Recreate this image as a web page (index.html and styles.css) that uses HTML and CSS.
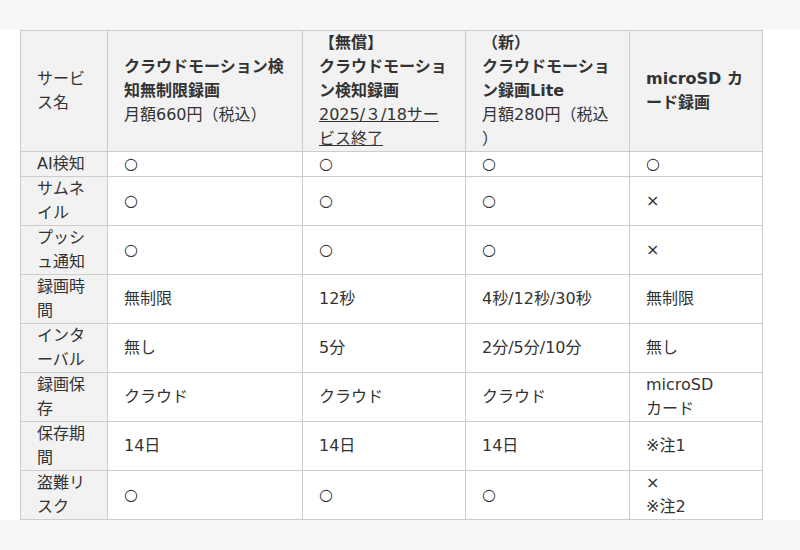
FILE: index.html
```html
<!DOCTYPE html>
<html lang="ja">
<head>
<meta charset="utf-8">
<title>比較表</title>
<link rel="stylesheet" href="styles.css">
</head>
<body>
<div class="band">
<table class="cmp">
<colgroup>
<col class="c1"><col class="c2"><col class="c3"><col class="c4"><col class="c5">
</colgroup>
<thead>
<tr>
<th class="lead">サービス名</th>
<th><b>クラウドモーション検知無制限録画</b><br><span class="price">月額660円（税込）</span></th>
<th><b>【無償】<br>クラウドモーション検知録画</b><br><a class="end" href="#">2025/３/18サービス終了</a></th>
<th><b>（新）<br>クラウドモーション録画Lite</b><br><span class="price">月額280円（税込<br>）</span></th>
<th><b>microSD カード録画</b></th>
</tr>
</thead>
<tbody>
<tr><th class="lead">AI検知</th><td>○</td><td>○</td><td>○</td><td>○</td></tr>
<tr><th class="lead">サムネイル</th><td>○</td><td>○</td><td>○</td><td>×</td></tr>
<tr><th class="lead">プッシュ通知</th><td>○</td><td>○</td><td>○</td><td>×</td></tr>
<tr><th class="lead">録画時間</th><td>無制限</td><td>12秒</td><td>4秒/12秒/30秒</td><td>無制限</td></tr>
<tr><th class="lead">インターバル</th><td>無し</td><td>5分</td><td>2分/5分/10分</td><td>無し</td></tr>
<tr><th class="lead">録画保存</th><td>クラウド</td><td>クラウド</td><td>クラウド</td><td>microSD <span class="nw">カード</span></td></tr>
<tr><th class="lead">保存期間</th><td>14日</td><td>14日</td><td>14日</td><td>※注1</td></tr>
<tr><th class="lead">盗難リスク</th><td>○</td><td>○</td><td>○</td><td>×<br>※注2</td></tr>
</tbody>
</table>
</div>
</body>
</html>
```
FILE: styles.css
```css
html, body {
  margin: 0;
  padding: 0;
  background: #f7f7f7;
}
body {
  font-family: "DejaVu Sans", "Noto Sans CJK JP", sans-serif;
  font-size: 16px;
  line-height: 24px;
  color: #333;
}
.band {
  margin-top: 30px;
  background: #fff;
  padding-left: 20px;
  height: 490px;
}
.cmp {
  border-collapse: collapse;
  table-layout: fixed;
  width: 742px;
  border: 1px solid #ccc;
}
.c1 { width: 87px; }
.c2 { width: 195px; }
.c3 { width: 163px; }
.c4 { width: 164px; }
.c5 { width: 133px; }
.cmp th, .cmp td {
  border: 1px solid #ccc;
  padding: 0 16px;
  text-align: left;
  vertical-align: middle;
  font-weight: normal;
}
.cmp thead th {
  background: #f2f2f2;
}
.cmp th.lead {
  background: #f2f2f2;
}
.cmp b {
  font-weight: bold;
}
.nw {
  white-space: nowrap;
}
.end {
  color: #333;
  text-decoration: underline;
}
```
